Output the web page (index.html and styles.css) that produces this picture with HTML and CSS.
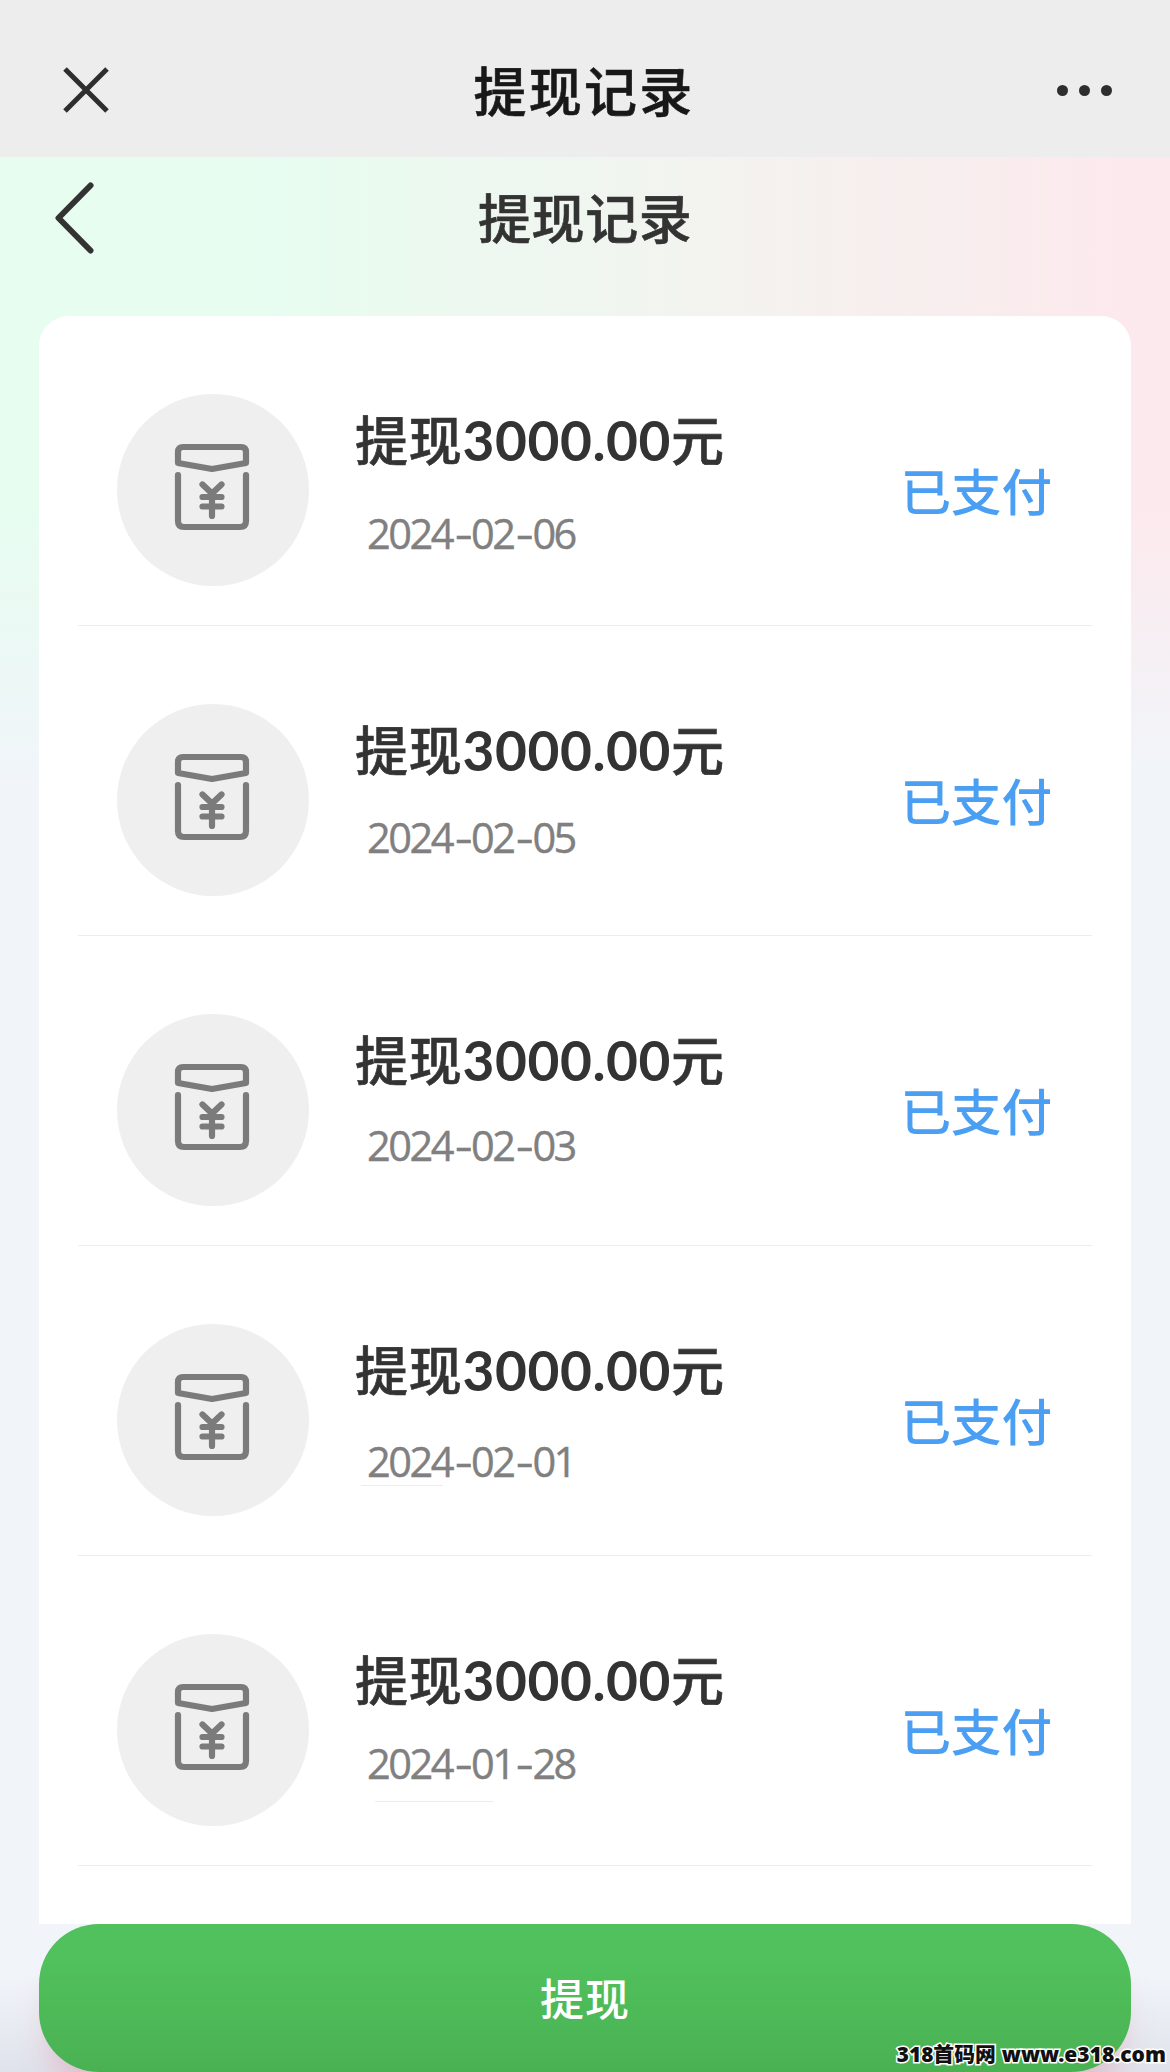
FILE: index.html
```html
<!DOCTYPE html>
<html lang="zh-CN">
<head>
<meta charset="utf-8">
<title>提现记录</title>
<link rel="stylesheet" href="styles.css">
</head>
<body>
<svg width="0" height="0" class="defs">
  <symbol id="packet" viewBox="0 0 76 88">
    <g fill="none" stroke="#7b7b7b" stroke-width="6.200" stroke-linecap="round" stroke-linejoin="round">
      <path d="M9 4H67Q72 4 72 9V20L38 26L4 20V9Q4 4 9 4Z"/>
      <path d="M4 32V78Q4 84 10 84H66Q72 84 72 78V32"/>
      <path d="M28.500 41.500L38 50.500L47.500 41.500M28.500 54H47.500M28.500 63.500H47.500M38 50.500V73"/>
    </g>
  </symbol>
</svg>
<div class="screen">
  <header class="topbar">
    <svg class="close" viewBox="0 0 48 48"><path d="M3 3L45 45M45 3L3 45"/></svg>
    <h1 class="topbar-title">提现记录</h1>
    <div class="more"><i></i><i></i><i></i></div>
  </header>
  <main class="page">
    <nav class="nav">
      <svg class="back" viewBox="0 0 39 72"><path d="M35.500 3.500L3.500 36L35.500 68.500"/></svg>
      <h2 class="nav-title">提现记录</h2>
    </nav>
    <section class="list">
      <article class="row">
        <div class="badge"><svg><use href="#packet"/></svg></div>
        <div class="info"><div class="amount">提现<span class="num">3000.00</span>元</div><time class="date date-a">2024<b>-</b>02<b>-</b>06</time></div>
        <div class="status">已支付</div>
      </article>
      <article class="row">
        <div class="badge"><svg><use href="#packet"/></svg></div>
        <div class="info"><div class="amount">提现<span class="num">3000.00</span>元</div><time class="date date-b">2024<b>-</b>02<b>-</b>05</time></div>
        <div class="status">已支付</div>
      </article>
      <article class="row">
        <div class="badge"><svg><use href="#packet"/></svg></div>
        <div class="info"><div class="amount">提现<span class="num">3000.00</span>元</div><time class="date date-c">2024<b>-</b>02<b>-</b>03</time></div>
        <div class="status">已支付</div>
      </article>
      <article class="row">
        <div class="badge"><svg><use href="#packet"/></svg></div>
        <div class="info"><div class="amount">提现<span class="num">3000.00</span>元</div><time class="date date-d">2024<b>-</b>02<b>-</b>01</time><hr class="rule rule-d"></div>
        <div class="status">已支付</div>
      </article>
      <article class="row">
        <div class="badge"><svg><use href="#packet"/></svg></div>
        <div class="info"><div class="amount">提现<span class="num">3000.00</span>元</div><time class="date date-e">2024<b>-</b>01<b>-</b>28</time><hr class="rule rule-e"></div>
        <div class="status">已支付</div>
      </article>
    </section>
    <footer class="footer"><button class="withdraw">提现</button></footer>
  </main>
  <div class="watermark"><span class="wm-cn">318首码网</span><span class="wm-url">www.e318.com</span></div>
</div>
</body>
</html>
```

FILE: styles.css
```css
* { box-sizing: border-box; margin: 0; }
body { font-family: "Noto Sans CJK SC", sans-serif; color: #333; }
.defs { display: block; }
.screen { position: relative; width: 1170px; height: 2072px; overflow: hidden; }

.topbar { display: flex; align-items: center; justify-content: space-between; height: 157px; padding: 23px 58px 0 62px; background: #ededed; }
.close { width: 48px; height: 48px; fill: none; stroke: #2e2e2e; stroke-width: 5; }
.topbar-title { font-size: 53px; font-weight: 500; line-height: 80px; letter-spacing: 2.300px; color: #181818; margin: -3px 0 0 1px; -webkit-text-stroke: .6px; }
.more { display: flex; gap: 11px; }
.more i { width: 11px; height: 11px; border-radius: 50%; background: #2e2e2e; }

.page {
  height: 1915px;
  background:
    linear-gradient(180deg, rgba(241,245,250,0) 350px, #f1f5fa 620px),
    linear-gradient(90deg, #e7fdf0 22%, #f4f2ef 65%, #fce9ed 96%);
}
.nav { display: flex; align-items: flex-start; height: 159px; padding: 25px 55px 0; }
.back { width: 39px; height: 72px; fill: none; stroke: #333; stroke-width: 6; stroke-linecap: round; stroke-linejoin: round; }
.nav-title { font-size: 53px; font-weight: 500; line-height: 80px; letter-spacing: .600px; margin: -6px 0 0 384px; -webkit-text-stroke: .6px; }

.list { height: 1608px; margin: 0 39px; padding: 0 39px; background: #fff; border-radius: 30px 30px 0 0; }
.row { display: flex; align-items: flex-start; height: 310px; padding: 78px 38px 0 39px; border-bottom: 1px solid #ededed; }
.badge { display: grid; place-items: center; width: 192px; height: 192px; border-radius: 50%; background: #efefef; }
.badge svg { width: 76px; height: 88px; margin: -6px 0 0 -2px; }
.info { flex: 1; margin-left: 46px; padding-top: 4px; }
.amount { height: 80px; font-size: 53px; font-weight: 500; line-height: 80px; letter-spacing: .800px; white-space: nowrap; -webkit-text-stroke: .6px; }
.num { font: 700 55px/1 Lato, sans-serif; letter-spacing: .550px; -webkit-text-stroke: 0; }
.date { display: block; height: 50px; margin-left: 12px; font-family: "Open Sans", sans-serif; font-size: 41.500px; line-height: 50px; color: #808080; letter-spacing: -2.500px; white-space: nowrap; -webkit-text-stroke: .4px; }
.date b { display: inline-block; width: 19px; text-align: center; text-indent: 1px; font-weight: 400; transform: scaleX(1.350); }
.date-a { margin-top: 30px; }
.date-b { margin-top: 24px; }
.date-c { margin-top: 22px; }
.date-d { margin-top: 28px; }
.date-e { margin-top: 20px; }
.rule { border: 0; height: 1px; background: #ececec; }
.rule-d { width: 82px; margin: -1px 0 0 6px; }
.rule-e { width: 118px; margin: 13px 0 0 20px; }
.status { margin: 55px 2px 0 0; font-size: 50.500px; font-weight: 500; line-height: 80px; color: #4b9ff3; }

.footer { height: 148px; padding: 0 39px; background: linear-gradient(180deg, rgba(225,229,239,0) 35%, #dfe2ea); }
.withdraw { display: block; width: 100%; height: 148px; border: 0; border-radius: 60px; background: linear-gradient(180deg, #50c15c 25%, #4ab153); box-shadow: 0 28px 30px -10px rgba(225,120,150,.35); color: #fff; font: 500 44px/80px "Noto Sans CJK SC", sans-serif; letter-spacing: 1px; padding-bottom: 4px; }

.watermark { position: absolute; right: 4px; bottom: 2px; display: flex; align-items: center; gap: 6px; line-height: 32px; color: #111; font-family: "Noto Sans", "Noto Sans CJK SC", sans-serif; font-weight: 900; font-size: 21px; paint-order: stroke fill; -webkit-text-stroke: 3px #fff; white-space: nowrap; }
.wm-cn { font-size: 20.800px; }
```
